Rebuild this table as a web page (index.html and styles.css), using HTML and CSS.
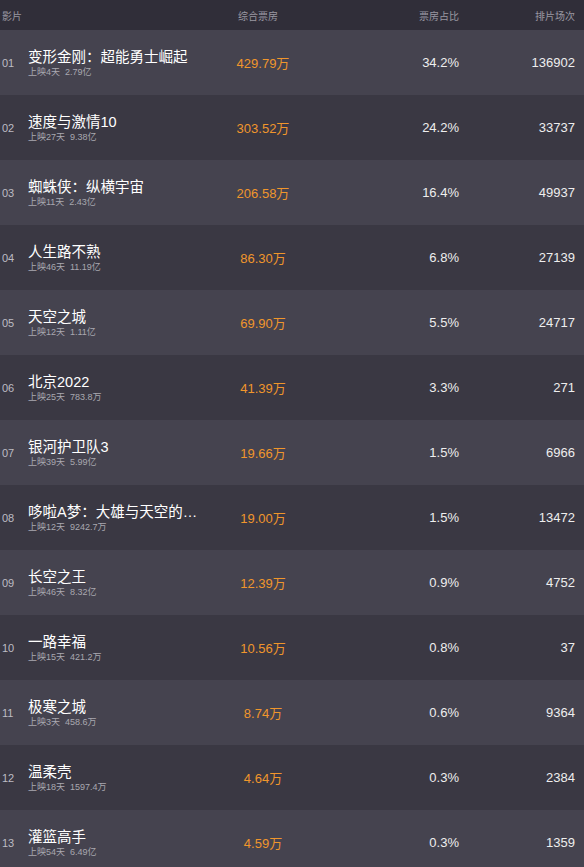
FILE: index.html
```html
<!DOCTYPE html>
<html lang="zh">
<head>
    <meta charset="UTF-8">
    <meta name="viewport" content="width=device-width, initial-scale=1.0">
    <title>实时票房</title>
    <link rel="stylesheet" href="styles.css">
</head>
<body>
    <div class="board">
        <div class="row head">
            <div class="film">影片</div>
            <div class="box">综合票房</div>
            <div class="rate">票房占比</div>
            <div class="shows">排片场次</div>
        </div>

        <div class="row">
            <div class="film"><span class="rank">01</span><div class="info"><p class="name">变形金刚：超能勇士崛起</p><p class="sub">上映4天 &nbsp;2.79亿</p></div></div>
            <div class="box">429.79万</div>
            <div class="rate">34.2%</div>
            <div class="shows">136902</div>
        </div>
        <div class="row">
            <div class="film"><span class="rank">02</span><div class="info"><p class="name">速度与激情10</p><p class="sub">上映27天 &nbsp;9.38亿</p></div></div>
            <div class="box">303.52万</div>
            <div class="rate">24.2%</div>
            <div class="shows">33737</div>
        </div>
        <div class="row">
            <div class="film"><span class="rank">03</span><div class="info"><p class="name">蜘蛛侠：纵横宇宙</p><p class="sub">上映11天 &nbsp;2.43亿</p></div></div>
            <div class="box">206.58万</div>
            <div class="rate">16.4%</div>
            <div class="shows">49937</div>
        </div>
        <div class="row">
            <div class="film"><span class="rank">04</span><div class="info"><p class="name">人生路不熟</p><p class="sub">上映46天 &nbsp;11.19亿</p></div></div>
            <div class="box">86.30万</div>
            <div class="rate">6.8%</div>
            <div class="shows">27139</div>
        </div>
        <div class="row">
            <div class="film"><span class="rank">05</span><div class="info"><p class="name">天空之城</p><p class="sub">上映12天 &nbsp;1.11亿</p></div></div>
            <div class="box">69.90万</div>
            <div class="rate">5.5%</div>
            <div class="shows">24717</div>
        </div>
        <div class="row">
            <div class="film"><span class="rank">06</span><div class="info"><p class="name">北京2022</p><p class="sub">上映25天 &nbsp;783.8万</p></div></div>
            <div class="box">41.39万</div>
            <div class="rate">3.3%</div>
            <div class="shows">271</div>
        </div>
        <div class="row">
            <div class="film"><span class="rank">07</span><div class="info"><p class="name">银河护卫队3</p><p class="sub">上映39天 &nbsp;5.99亿</p></div></div>
            <div class="box">19.66万</div>
            <div class="rate">1.5%</div>
            <div class="shows">6966</div>
        </div>
        <div class="row">
            <div class="film"><span class="rank">08</span><div class="info"><p class="name">哆啦A梦：大雄与天空的…</p><p class="sub">上映12天 &nbsp;9242.7万</p></div></div>
            <div class="box">19.00万</div>
            <div class="rate">1.5%</div>
            <div class="shows">13472</div>
        </div>
        <div class="row">
            <div class="film"><span class="rank">09</span><div class="info"><p class="name">长空之王</p><p class="sub">上映46天 &nbsp;8.32亿</p></div></div>
            <div class="box">12.39万</div>
            <div class="rate">0.9%</div>
            <div class="shows">4752</div>
        </div>
        <div class="row">
            <div class="film"><span class="rank">10</span><div class="info"><p class="name">一路幸福</p><p class="sub">上映15天 &nbsp;421.2万</p></div></div>
            <div class="box">10.56万</div>
            <div class="rate">0.8%</div>
            <div class="shows">37</div>
        </div>
        <div class="row">
            <div class="film"><span class="rank">11</span><div class="info"><p class="name">极寒之城</p><p class="sub">上映3天 &nbsp;458.6万</p></div></div>
            <div class="box">8.74万</div>
            <div class="rate">0.6%</div>
            <div class="shows">9364</div>
        </div>
        <div class="row">
            <div class="film"><span class="rank">12</span><div class="info"><p class="name">温柔壳</p><p class="sub">上映18天 &nbsp;1597.4万</p></div></div>
            <div class="box">4.64万</div>
            <div class="rate">0.3%</div>
            <div class="shows">2384</div>
        </div>
        <div class="row">
            <div class="film"><span class="rank">13</span><div class="info"><p class="name">灌篮高手</p><p class="sub">上映54天 &nbsp;6.49亿</p></div></div>
            <div class="box">4.59万</div>
            <div class="rate">0.3%</div>
            <div class="shows">1359</div>
        </div>
    </div>
</body>
</html>
```

FILE: styles.css
```css
body {
    margin: 0;
    background-color: #3a3843;
    font-family: "Liberation Sans", "Noto Sans CJK SC", sans-serif;
    color: #eeeeee;
}
.board {
    display: flex;
    flex-direction: column;
}
.row {
    display: grid;
    grid-template-columns: 210px 106px 143px 1fr;
    align-items: center;
    height: 65px;
    padding-right: 9px;
    font-size: 13px;
}
.row:nth-child(even) {
    background-color: #45434f;
}
.row:nth-child(odd) {
    background-color: #3a3843;
}
.row.head {
    height: 30px;
    background-color: #302e39;
    font-size: 10px;
    color: #9a98a2;
}
.head .film {
    padding-left: 2px;
}
.film {
    display: flex;
    align-items: center;
    min-width: 0;
}
.rank {
    width: 26px;
    padding-left: 2px;
    font-size: 11px;
    color: #bdbcc3;
}
.info {
    min-width: 0;
    flex: 1;
}
.name {
    margin: 0;
    font-size: 14.5px;
    line-height: 18px;
    color: #ffffff;
    white-space: nowrap;
}
.sub {
    margin: 0;
    font-size: 9px;
    line-height: 12px;
    color: #a9a8b0;
    white-space: nowrap;
}
.box {
    text-align: center;
    color: #f0962c;
}
.head .box {
    color: #9a98a2;
    padding-right: 10px;
}
.rate {
    text-align: right;
}
.shows {
    text-align: right;
}
```
